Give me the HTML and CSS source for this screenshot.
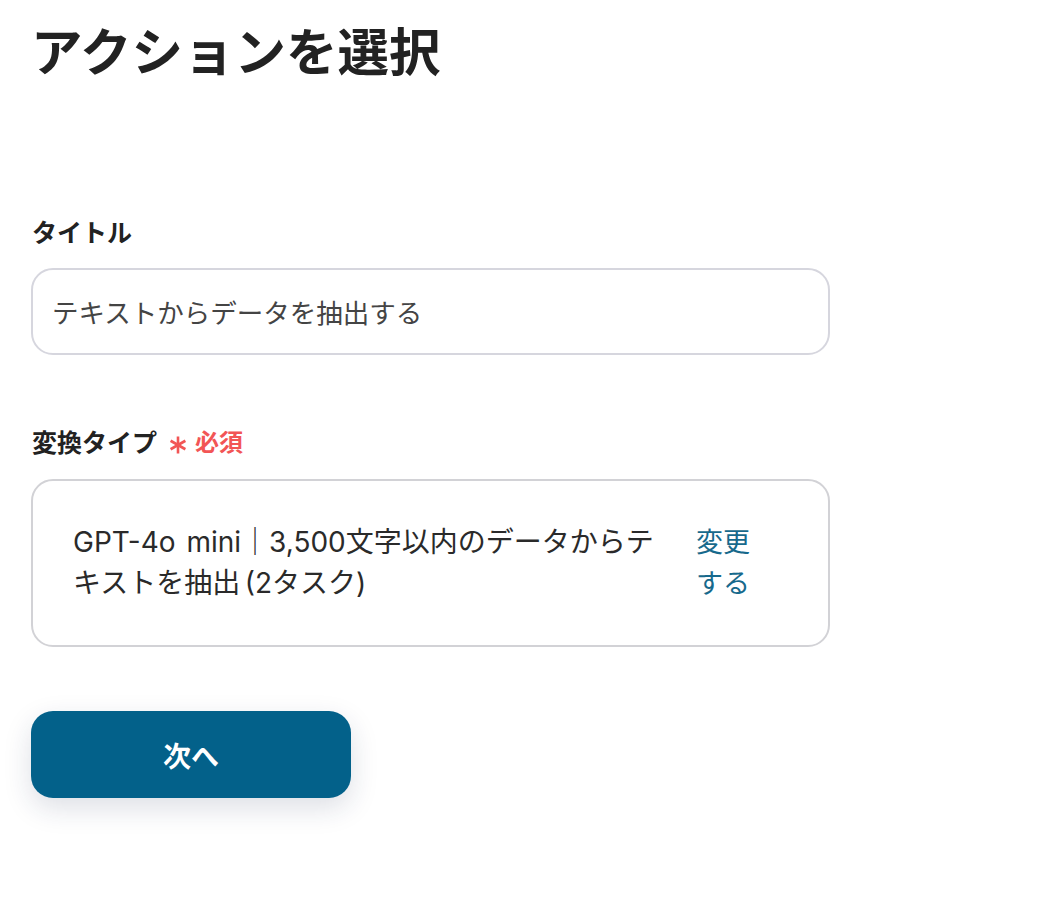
FILE: index.html
```html
<!DOCTYPE html>
<html lang="ja">
<head>
<meta charset="utf-8">
<link rel="stylesheet" href="styles.css">
</head>
<body>
<div class="page">
  <h1 class="title">アクションを選択</h1>
  <div class="field field-first">
    <div class="label">タイトル</div>
    <div class="input">テキストからデータを抽出する</div>
  </div>
  <div class="field field-second">
    <div class="label">変換タイプ<span class="req"><svg class="ast" viewBox="0 0 18 18" width="18" height="18" aria-hidden="true"><g stroke="#f25555" stroke-width="2.6" stroke-linecap="butt"><line x1="9" y1="0.5" x2="9" y2="17.5"/><line x1="1.6" y1="4.75" x2="16.4" y2="13.25"/><line x1="1.6" y1="13.25" x2="16.4" y2="4.75"/></g></svg>必須</span></div>
    <div class="card">
      <div class="card-text">GPT-4o mini｜3,500文字以内のデータからテキストを抽出&#x2006;(2タスク)</div>
      <div class="card-link">変更する</div>
    </div>
  </div>
  <button class="btn">次へ</button>
</div>
</body>
</html>
```

FILE: styles.css
```css
* { box-sizing: border-box; }
html, body { margin: 0; padding: 0; background: #fff; }
body {
  font-family: Inter, "Noto Sans CJK JP", "Noto Sans", sans-serif;
  color: #222;
}
.page {
  padding: 14px 0 80px 31px;
}
.title {
  margin: 0;
  font-family: "Noto Sans CJK JP", sans-serif;
  font-size: 51.5px;
  line-height: 70px;
  font-weight: 700;
  color: #222;
}
.field-first { margin-top: 129px; }
.field-second { margin-top: 68px; }
.label {
  font-family: "Noto Sans CJK JP", sans-serif;
  font-size: 25px;
  line-height: 36px;
  font-weight: 700;
  color: #222;
  display: flex;
  align-items: center;
  padding-left: 1px;
}
.req {
  display: inline-flex;
  align-items: center;
  color: #f25555;
  font-size: 24px;
  font-weight: 700;
  margin-left: 12px;
}
.ast {
  display: block;
  margin-right: 8px;
  position: relative;
  top: 4px;
}
.input {
  margin-top: 19px;
  width: 799px;
  height: 87px;
  border: 2px solid #d6d6de;
  border-radius: 22px;
  padding: 0 19px;
  display: flex;
  align-items: center;
  font-size: 26.5px;
  color: #444;
}
.card {
  margin-top: 20px;
  width: 799px;
  border: 2px solid #d2d2d6;
  border-radius: 22px;
  padding: 41px 76px 41px 40px;
  display: flex;
  align-items: flex-start;
  gap: 20px;
  font-size: 28px;
  line-height: 41px;
}
.card-text {
  flex: 1 1 auto;
  color: #2a2a2a;
  word-spacing: 3px;
}
.card-link {
  flex: 0 0 56px;
  width: 56px;
  color: #17698c;
  font-size: 27px;
}
.btn {
  margin-top: 64px;
  width: 320px;
  height: 87px;
  border: none;
  border-radius: 22px;
  background: #03618a;
  color: #fff;
  font-family: "Noto Sans CJK JP", sans-serif;
  font-size: 28px;
  font-weight: 700;
  box-shadow: 0 10px 28px rgba(30, 40, 80, 0.15);
  display: block;
}
```
